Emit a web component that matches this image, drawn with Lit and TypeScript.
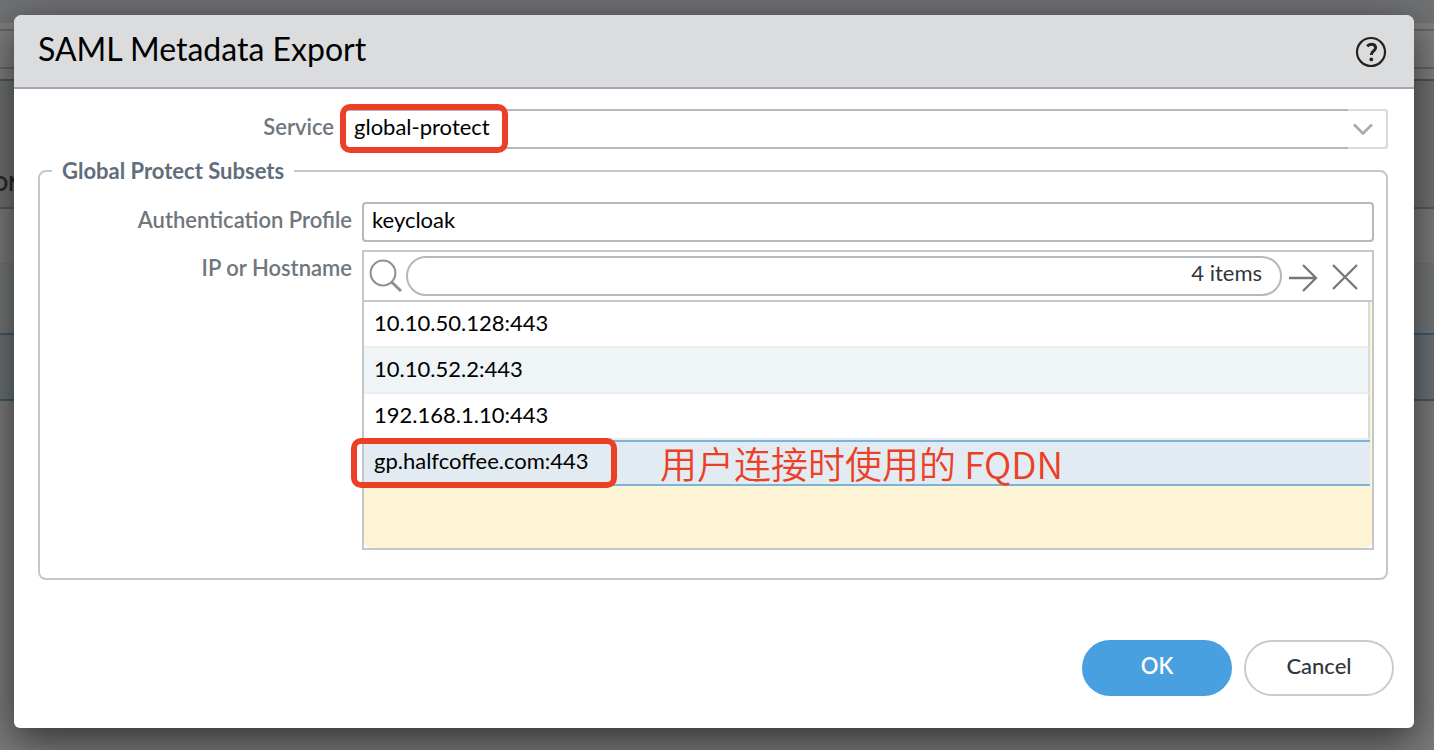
import { LitElement, html, css } from "lit";
import { customElement, property, state } from "lit/decorators.js";
import { classMap } from "lit/directives/class-map.js";

/** Dimmed application page that stays visible around the dialog. */
@customElement("page-backdrop")
class PageBackdrop extends LitElement {
  static styles = css`
    :host {
      display: flex;
      flex-direction: column;
      font: 700 20px/24px Lato, "Open Sans", sans-serif;
      color: #26282a;
      background: #7b7b7b;
    }
    .bar { height: 23px; background: #707173; }
    .gap { height: 6px; background: #7f7f7f; }
    .tools {
      height: 36px;
      background: #7e7e7e;
      border-top: 2px solid #646667;
      border-bottom: 2px solid #646667;
    }
    .space { height: 10px; background: #7f7f7f; }
    .head {
      height: 126px;
      display: flex;
      align-items: flex-end;
      background: #707372;
      border-top: 2px solid #525455;
      border-bottom: 2px solid #5a5c5c;
    }
    .head span { margin-left: -8px; padding-bottom: 12px; }
    .row { height: 54px; border-bottom: 2px solid #747474; }
    .alt { height: 68px; background: #747778; }
    .picked {
      height: 64px;
      background: #6b7276;
      border-top: 2px solid #3d5a6e;
      border-bottom: 2px solid #3d5a6e;
    }
  `;

  render() {
    return html`
      <div class="bar"></div>
      <div class="gap"></div>
      <div class="tools"></div>
      <div class="space"></div>
      <div class="head"><span>ON</span></div>
      <div class="row"></div>
      <div class="alt"></div>
      <div class="picked"></div>
    `;
  }
}

/** Searchable list of the host entries. */
@customElement("host-list")
class HostList extends LitElement {
  static styles = css`
    :host {
      display: flex;
      flex-direction: column;
      min-height: 300px;
      box-sizing: border-box;
      border: 2px solid #c4c8cc;
      background: #fff;
    }
    .toolbar {
      display: flex;
      align-items: center;
      gap: 4px;
      height: 48px;
      padding: 0 10px 0 4px;
      border-bottom: 2px solid #c4c8cc;
    }
    .search { flex: 1; min-width: 0; position: relative; display: flex; }
    .search input {
      width: 100%;
      height: 40px;
      box-sizing: border-box;
      padding: 0 100px 4px 18px;
      border: 2px solid #b4b9be;
      border-radius: 20px;
      font: inherit;
      background: #fff;
      outline: none;
    }
    .count {
      position: absolute;
      right: 20px;
      top: 3px;
      color: #31363c;
    }
    .icon {
      flex: none;
      display: flex;
      padding: 0;
      border: 0;
      background: none;
    }
    .actions { display: flex; gap: 10px; padding: 4px 0 0 2px; }
    svg { display: block; fill: none; }
    .body {
      flex: 1;
      padding-right: 2px;
      background: #fdf3d5;
      border-radius: 0 0 8px 8px;
    }
    ul { margin: 0; padding: 0; list-style: none; }
    li {
      position: relative;
      height: 46px;
      box-sizing: border-box;
      padding: 7px 10px 0;
      background: #fff;
      border-bottom: 2px solid #ededed;
      border-right: 2px solid #d9dadb;
      color: #000;
    }
    .alt { background: #eff4f7; }
    .picked {
      padding-top: 5px;
      background: #e2ebf2;
      border: 0 solid #7bb3d9;
      border-width: 2px 0;
    }
    .mark {
      position: absolute;
      left: -13px;
      top: -4px;
      width: 266px;
      height: 50px;
      box-sizing: border-box;
      border: 6px solid #ec4026;
      border-radius: 10px;
    }
    .note {
      position: absolute;
      left: 296px;
      top: -3px;
      font: 350 37px/48px "Noto Sans CJK SC", sans-serif;
      color: #ec4026;
      white-space: nowrap;
    }
  `;

  @property({ attribute: false }) hosts: string[] = [];
  @state() private selected = 3;

  render() {
    return html`
      <div class="toolbar">
        <svg width="34" height="36" viewBox="0 0 34 36" stroke="#8b8f92" stroke-width="2">
          <circle cx="15" cy="15" r="12.4" />
          <path d="M23.6 24 33 33" stroke-width="3" />
        </svg>
        <div class="search">
          <input type="text" aria-label="Search hosts" />
          <span class="count">${this.hosts.length} items</span>
        </div>
        <div class="actions">
          <button class="icon" aria-label="Apply filter">
            <svg width="32" height="32" viewBox="0 0 32 32" stroke="#777" stroke-width="2.3">
              <path d="M1 16H28M15 3 28 16 15 29" />
            </svg>
          </button>
          <button class="icon" aria-label="Clear filter">
            <svg width="32" height="32" viewBox="0 0 32 32" stroke="#777" stroke-width="2.3">
              <path d="M3 3 27 27M27 3 3 27" />
            </svg>
          </button>
        </div>
      </div>
      <div class="body">
        <ul>
          ${this.hosts.map(
            (host, i) => html`
              <li
                class=${classMap({ alt: i % 2 === 1, picked: i === this.selected })}
                @click=${() => (this.selected = i)}
              >
                ${host}
                ${i === this.hosts.length - 1
                  ? html`<span class="mark"></span><span class="note">用户连接时使用的 FQDN</span>`
                  : null}
              </li>
            `
          )}
        </ul>
      </div>
    `;
  }
}

@customElement("app-root")
class AppRoot extends LitElement {
  static styles = css`
    :host {
      display: block;
      position: relative;
      min-height: 100vh;
      box-sizing: border-box;
      padding: 15px 20px 22px 14px;
      overflow: hidden;
      font: 22px/28px Lato, "Open Sans", sans-serif;
      color: #000;
    }
    page-backdrop { position: absolute; inset: 0; }
    .dialog {
      position: relative;
      display: flex;
      flex-direction: column;
      min-height: calc(100vh - 37px);
      border-radius: 8px 8px 6px 6px;
      background: #fff;
      box-shadow: 0 12px 40px rgba(0, 0, 0, 0.6);
    }
    header {
      display: flex;
      align-items: center;
      justify-content: space-between;
      height: 72px;
      padding: 0 26px 0 24px;
      background: #dbdcde;
      border-bottom: 2px solid #a3a7ad;
      border-radius: 8px 8px 0 0;
    }
    h1 { margin: 0; padding-bottom: 4px; font-size: 32px; line-height: 40px; font-weight: 400; }
    .help { padding: 2px 0 0; border: 0; background: none; display: flex; }
    svg { display: block; fill: none; }
    .content { padding: 20px 26px 0 24px; }
    .service { display: grid; grid-template-columns: 296px 1fr; column-gap: 10px; }
    label, .label {
      padding-top: 4px;
      text-align: right;
      font-weight: 600;
      color: #6f767d;
    }
    .combo { position: relative; display: flex; }
    select {
      flex: 1;
      min-width: 0;
      height: 40px;
      box-sizing: border-box;
      appearance: none;
      padding: 0 46px 4px 8px;
      border: 2px solid #b4b9be;
      border-radius: 4px;
      background: #fff;
      font: inherit;
      color: #000;
      outline: none;
    }
    .trigger {
      position: absolute;
      right: 0;
      top: 0;
      width: 40px;
      height: 40px;
      box-sizing: border-box;
      display: grid;
      place-items: center;
      padding-right: 8px;
      border: 2px solid #d9dcde;
      border-left: 0;
      border-radius: 0 4px 4px 0;
      background: #fff;
      pointer-events: none;
    }
    .mark {
      position: absolute;
      left: -4px;
      top: -5px;
      width: 168px;
      height: 49px;
      box-sizing: border-box;
      border: 6px solid #ec4026;
      border-radius: 10px;
      pointer-events: none;
    }
    fieldset {
      min-width: 0;
      margin: 8px 0 0;
      padding: 17px 12px 28px;
      border: 2px solid #c4c8cc;
      border-radius: 8px;
    }
    legend { padding: 0 10px; line-height: 28px; font-weight: 700; color: #5f6e7c; }
    .fields {
      display: grid;
      grid-template-columns: 300px 1fr;
      gap: 8px 10px;
    }
    .text {
      width: 100%;
      height: 40px;
      box-sizing: border-box;
      padding: 0 8px 6px;
      border: 2px solid #b4b9be;
      border-radius: 4px;
      background: #fff;
      font: inherit;
      color: #000;
      outline: none;
    }
    footer {
      display: flex;
      justify-content: flex-end;
      gap: 12px;
      margin-top: auto;
      padding: 0 20px 32px;
    }
    .action {
      width: 150px;
      height: 56px;
      box-sizing: border-box;
      padding: 0 0 4px;
      border: 2px solid #c9cccf;
      border-radius: 28px;
      background: #fff;
      font: inherit;
      font-weight: 500;
      color: #31363c;
    }
    .primary { border-color: #49a0e1; background: #49a0e1; color: #fff; font-weight: 600; }
  `;

  private hosts = [
    "10.10.50.128:443",
    "10.10.52.2:443",
    "192.168.1.10:443",
    "gp.halfcoffee.com:443",
  ];

  render() {
    return html`
      <page-backdrop aria-hidden="true"></page-backdrop>
      <div class="dialog" role="dialog" aria-labelledby="title">
        <header>
          <h1 id="title">SAML Metadata Export</h1>
          <button class="help" aria-label="Help">
            <svg width="34" height="34" viewBox="0 0 34 34" stroke="#222">
              <circle cx="17" cy="17" r="14" stroke-width="2.2" />
              <path
                d="M13.2 11.4C14.4 9.8 16 9.2 17.6 9.3C20 9.4 21.6 10.7 21.6 12.8C21.6 16 17.3 16 17.3 20"
                stroke-width="3"
              />
              <circle cx="17.3" cy="24.4" r="1.9" fill="#222" stroke="none" />
            </svg>
          </button>
        </header>
        <div class="content">
          <div class="service">
            <label for="service">Service</label>
            <div class="combo">
              <select id="service">
                <option>global-protect</option>
              </select>
              <span class="trigger">
                <svg width="20" height="12" viewBox="0 0 20 12" stroke="#a5abb0" stroke-width="2.6">
                  <path d="M1 1.5 10 10.5 19 1.5" />
                </svg>
              </span>
              <span class="mark"></span>
            </div>
          </div>
          <fieldset>
            <legend>Global Protect Subsets</legend>
            <div class="fields">
              <label for="profile">Authentication Profile</label>
              <input class="text" id="profile" type="text" value="keycloak" />
              <span class="label">IP or Hostname</span>
              <host-list aria-label="IP or Hostname" .hosts=${this.hosts}></host-list>
            </div>
          </fieldset>
        </div>
        <footer>
          <button class="action primary">OK</button>
          <button class="action">Cancel</button>
        </footer>
      </div>
    `;
  }
}
